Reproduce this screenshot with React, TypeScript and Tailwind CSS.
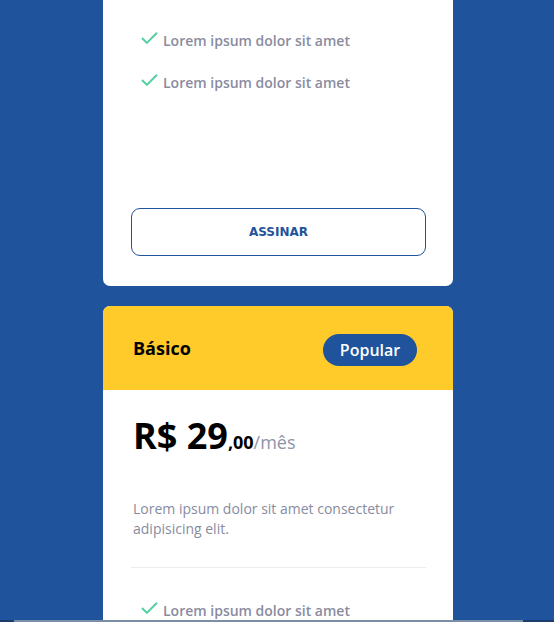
import React from "react";

const font = { fontFamily: '"Open Sans", "Noto Sans", sans-serif' };

function Check() {
  return (
    <svg width="21" height="21" viewBox="0 0 24 24" fill="none" stroke="#4fcf9e" strokeWidth="2.2" strokeLinecap="round" strokeLinejoin="round" className="shrink-0 -mt-[3px]">
      <path d="M20 6 9 17l-5-5" />
    </svg>
  );
}

function Feature({ className = "" }: { className?: string }) {
  return (
    <li className={`flex items-start gap-[3px] pl-[8px] text-[14px] leading-[20px] font-semibold text-[#8a8c9f] ${className}`}>
      <Check />
      <span>Lorem ipsum dolor sit amet</span>
    </li>
  );
}

export default function App() {
  return (
    <div className="relative h-[622px] overflow-hidden bg-[#1f539c] flex flex-col items-center pl-[2px]" style={font}>
      <div className="w-[350px] bg-white rounded-b-[7px] pl-[28px] pr-[27px] pt-[31px] pb-[30px]">
        <ul className="flex flex-col gap-[22px]">
          <Feature />
          <Feature />
        </ul>
        <button
          className="mt-[115px] w-full h-[48px] rounded-[9px] border border-[#1f539c] bg-white text-[#1f539c] text-[12px] font-bold"
          style={{ fontFamily: '"DejaVu Sans", Verdana, sans-serif' }}
        >
          ASSINAR
        </button>
      </div>

      <div className="mt-[20px] w-[350px] bg-white rounded-t-[7px] overflow-hidden">
        <div className="h-[84px] bg-[#ffcb2b] flex items-center justify-between pl-[30px] pr-[36px]">
          <span className="text-[18px] font-bold text-black">Básico</span>
          <span className="mt-[4px] h-[32px] w-[94px] rounded-full bg-[#1f539c] text-white text-[16px] font-semibold flex items-center justify-center">
            Popular
          </span>
        </div>
        <div className="pl-[28px] pr-[27px]">
          <div className="mt-[28px] pl-[2px] flex items-baseline leading-none">
            <span className="text-[36px] font-bold text-black">R$ 29</span>
            <span className="text-[18px] font-bold text-black">,00</span>
            <span className="text-[18px] text-[#8e93a7]">/mês</span>
          </div>
          <p className="mt-[45px] pl-[2px] text-[14px] leading-[20px] text-[#878b9f] pr-[4px]">
            Lorem ipsum dolor sit amet consectetur adipisicing elit.
          </p>
          <div className="mt-[28px] h-px bg-[#ececf0]" />
          <ul className="mt-[33px] flex flex-col gap-[22px]">
            <Feature />
            <Feature />
          </ul>
        </div>
      </div>

      <div className="absolute left-0 right-0 bottom-0 h-[2px] flex">
        <div className="w-[14px] bg-[#1a3b6b]" />
        <div className="flex-1 bg-[#7a8ea8]" />
        <div className="w-[31px] bg-[#1b3d6e]" />
      </div>
    </div>
  );
}
